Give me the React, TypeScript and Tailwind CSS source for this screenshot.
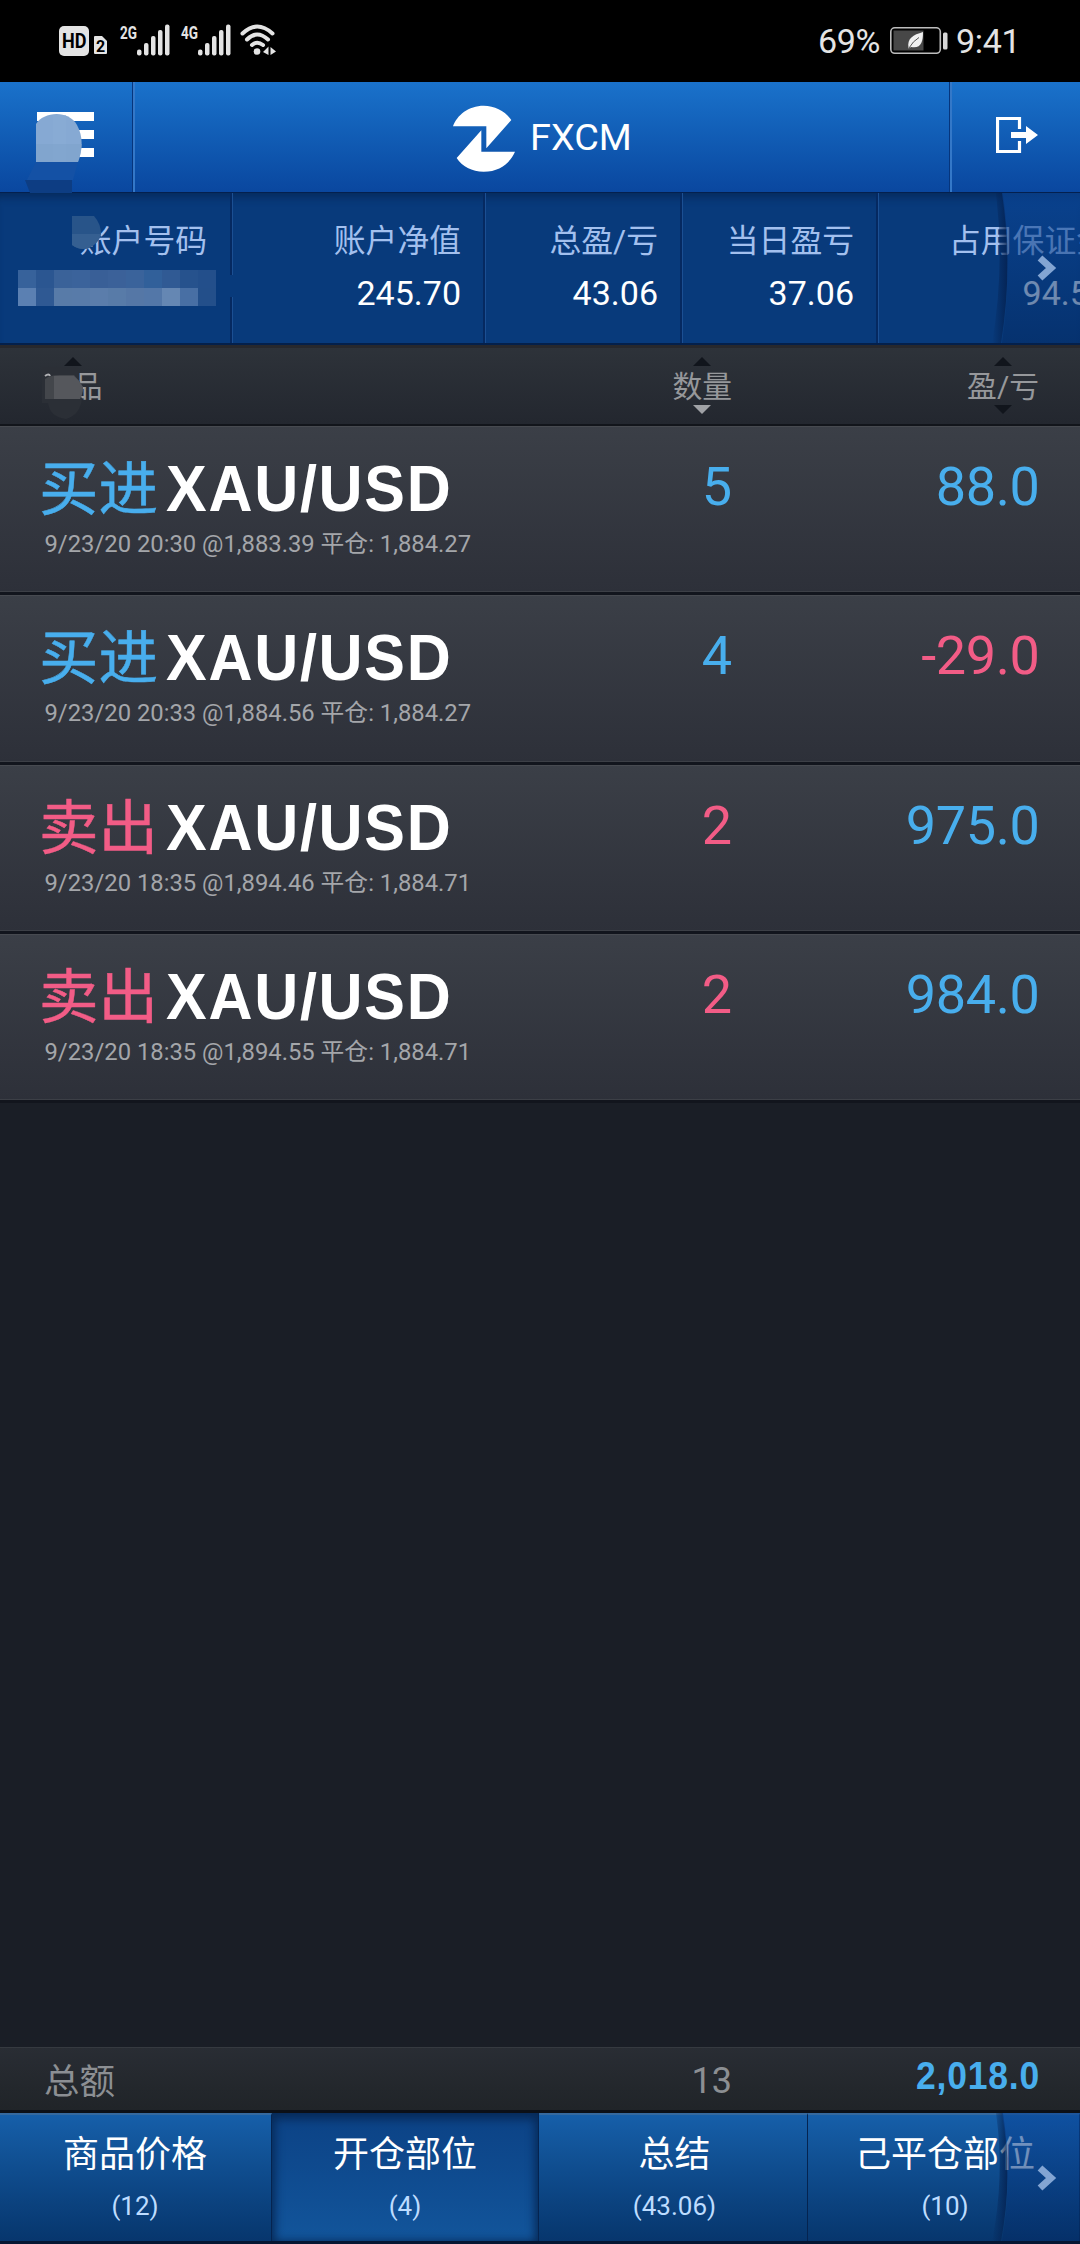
import type { ReactNode } from "react";

const cjk = "font-['Roboto','Noto_Sans_CJK_SC',sans-serif]";

/** Signal strength meter: five rising bars with the network generation above. */
function Signal({ label }: { label: string }) {
  return (
    <svg className="block h-[34px] w-[51px] overflow-visible" viewBox="0 0 51 34" fill="#e4e4e4">
      <text x="0" y="15.500" fontFamily="Roboto" fontWeight="700" fontSize="19" textLength="17" lengthAdjust="spacingAndGlyphs">
        {label}
      </text>
      <rect x="17" y="26.500" width="4.500" height="6" rx="2" />
      <rect x="24" y="20" width="4.500" height="12.500" rx="2" />
      <rect x="31" y="13" width="4.500" height="19.500" rx="2" />
      <rect x="38" y="7" width="4.500" height="25.500" rx="2" />
      <rect x="45" y="1.500" width="4.500" height="31" rx="2" />
    </svg>
  );
}

function StatusBar() {
  return (
    <div className="flex h-[82px] items-start bg-black text-[#e4e4e4]">
      <div className="ml-[59px] mt-[26px] h-[30px] w-[30px]">
        <svg className="block overflow-visible" width="30" height="30" viewBox="0 0 30 30">
          <rect width="30" height="30" rx="5" fill="#e4e4e4" />
          <text x="3" y="21.800" fontFamily="Roboto" fontWeight="700" fontSize="19.500" fill="#000" textLength="24.500" lengthAdjust="spacingAndGlyphs">HD</text>
        </svg>
      </div>
      <svg className="ml-[5px] mt-[36px] block overflow-visible" width="13" height="18" viewBox="0 0 13 18">
        <path d="M1 0H8L13 5V17Q13 18 12 18H1Q0 18 0 17V1Q0 0 1 0Z" fill="#e4e4e4" />
        <text x="2" y="15.500" fontFamily="Roboto" fontWeight="700" fontSize="16" fill="#000">2</text>
      </svg>
      <div className="ml-[13px] mt-[23px]"><Signal label="2G" /></div>
      <div className="ml-[10px] mt-[23px]"><Signal label="4G" /></div>
      <svg className="ml-[7px] mt-[24px] block" width="40" height="33" viewBox="0 0 40 33" fill="none" stroke="#e4e4e4" strokeWidth="4" strokeLinecap="round">
        <path d="M3.500 9.500Q18 -4.500 33.500 9.500" />
        <path d="M8 15.500Q18 5.500 29 15.500" />
        <path d="M13 21Q18 16.500 24 21" />
        <circle cx="18" cy="27.500" r="3.300" fill="#e4e4e4" stroke="none" />
        <path d="M24 28L29.500 22.500V31M31.500 31V23L37 27.500Z" fill="#e4e4e4" stroke="none" />
      </svg>
      <div className="ml-auto mt-[21px] w-[63px] whitespace-nowrap font-['Roboto'] text-[34px] leading-[40px] tracking-[-0.3px]">69%</div>
      <svg className="ml-[9px] mt-[27px] block" width="58" height="28" viewBox="0 0 58 28">
        <rect x="0.800" y="0.800" width="49.500" height="25.500" rx="4" fill="none" stroke="#bdbdbd" strokeWidth="1.600" />
        <rect x="3.500" y="3.500" width="30" height="20" fill="#474747" />
        <path d="M18.500 21C17 11 23 8 33 5C33 15 31 22 21 20L18.800 21.500Z" fill="#f0f0f0" />
        <path d="M19 21Q23 14 29 10.500" stroke="#555" fill="none" strokeWidth="1" />
        <rect x="53" y="5.500" width="4.500" height="17" rx="1.500" fill="#d8d8d8" />
      </svg>
      <div className="ml-[8px] mr-[62px] mt-[21px] w-[62px] whitespace-nowrap font-['Roboto'] text-[34px] leading-[40px] tracking-[-0.3px]">9:41</div>
    </div>
  );
}

function Header() {
  return (
    <header className="relative flex h-[111px] border-b border-[#04204f] bg-linear-to-b from-[#1a72cb] to-[#0a479f] text-white">
      <div className="flex w-[132px] flex-col gap-[9px] pl-[37px] pt-[30px]">
        <div className="h-[9px] w-[57px] bg-white" />
        <div className="h-[9px] w-[57px] bg-white" />
        <div className="h-[9px] w-[57px] bg-white" />
      </div>
      <div className="flex flex-1 border-l border-[#06357c] shadow-[inset_2px_0_0_#3478c8]">
        <svg className="ml-[319px] mt-[22px] block" width="65" height="69" viewBox="155 70 195 207" fill="#fff">
          <path d="M158 137C170 103 205 75 250 75C285 75 315 92 333 118L258 203V137Z" />
          <path d="M344 213C330 245 300 273 250 273C215 273 185 257 169 232L243 149V213Z" />
        </svg>
        <div className="ml-[13px] mt-[33px] font-['Roboto'] text-[37.800px] leading-[44px]">FXCM</div>
      </div>
      <div className="w-[131px] border-l border-[#06357c] pl-[46px] pt-[35px] shadow-[inset_2px_0_0_#3478c8]">
        <svg className="block" width="43" height="37" viewBox="0 0 43 37">
          <path d="M23.500 12V1.500H1.500V34.500H23.500V24" fill="none" stroke="#fff" strokeWidth="3.200" />
          <path d="M15 15H30V9L42 18L30 27V21H15Z" fill="#fff" />
        </svg>
      </div>
      {/* redaction smudge over the menu button */}
      <svg className="absolute left-[15px] top-[25px]" width="70" height="95" viewBox="0 0 70 95">
        <path d="M21 17C28 5 53 2 62 18C68 29 68 42 63 55H21Z" fill="#86a9d3" />
        <path d="M38 8H51V55H38Z" fill="#8badd5" opacity=".6" />
        <path d="M21 37H67Q66 47 63 55H21Z" fill="#7fa3cb" opacity=".6" />
        <path d="M21 55H63L58 73H12Z" fill="#1451a5" />
        <path d="M10 73H57V86L62 95H10L15 86Z" fill="#0d3d83" />
      </svg>
    </header>
  );
}

/** Curved shade at the right edge of a strip that scrolls sideways. */
function ScrollShade({ height, id, chevronTop }: { height: number; id: string; chevronTop: number }) {
  return (
    <svg className="absolute right-0 top-0" width="88" height={height} viewBox={`0 0 88 ${height}`}>
      <defs>
        <linearGradient id={id} x1="0" y1="0" x2="0" y2="1">
          <stop offset="0" stopColor="#0a479b" />
          <stop offset="1" stopColor="#042c66" />
        </linearGradient>
        <linearGradient id={`${id}-edge`} x1="0" y1="0" x2="1" y2="0">
          <stop offset="0" stopColor="#04204f" stopOpacity="0" />
          <stop offset="1" stopColor="#04204f" stopOpacity=".85" />
        </linearGradient>
      </defs>
      <path d={`M4 0H11Q21 ${height / 2} 9 ${height}H0Q13 ${height / 2} 4 0Z`} fill={`url(#${id}-edge)`} />
      <path d={`M10 0Q21 ${height / 2} 10 ${height}H88V0Z`} fill={`url(#${id})`} opacity=".58" />
      <path d={`M48 ${chevronTop + 2}L59 ${chevronTop + 12}L48 ${chevronTop + 22}`} fill="none" stroke="#83a5d3" strokeWidth="7" />
    </svg>
  );
}

function Metric({ label, value, box }: { label: string; value: string; box: string }) {
  return (
    <div className={`flex shrink-0 flex-col items-end whitespace-nowrap border-r-2 border-[#052961] pt-[26px] shadow-[1px_0_0_#1b4f93] ${box}`}>
      <div className="h-[50px] text-[31.800px] leading-[45px] text-[#a3c0ee]">{label}</div>
      <div className="h-[50px] text-[34px] leading-[49px] text-white">{value}</div>
    </div>
  );
}

const tiles = [
  ["#37629b", "#5b80b2"], ["#2b5691", "#2f5993"], ["#3a6299", "#587ba8"], ["#3b639b", "#587ba9"], ["#395f97", "#5b7dab"], ["#3b6199", "#587ba8"],
  ["#3a639b", "#5577a6"], ["#31609a", "#5377a8"], ["#305a94", "#6587b3"], ["#26528d", "#486fa4"], ["#234f8b", "#234f8a"],
];

function AccountBar() {
  return (
    <section className="relative flex h-[152px] overflow-hidden border-b-2 border-[#04204b] bg-[#083a7b] shadow-[inset_0_10px_9px_-6px_#062a5c]">
      <Metric label="账户号码" value="" box="w-[232px] pr-[23px]" />
      <Metric label="账户净值" value="245.70" box="w-[253px] pr-[22px]" />
      <Metric label="总盈/亏" value="43.06" box="w-[197px] pr-[22px]" />
      <Metric label="当日盈亏" value="37.06" box="w-[196px] pr-[22px]" />
      <Metric label="占用保证金" value="94.52" box="w-[254px] pr-[22px]" />
      <svg className="absolute left-[72px] top-[23px]" width="30" height="35" viewBox="0 0 30 35">
        <path d="M0 0H22Q29 8 29 18Q27 27 17 32Q8 35 0 29Z" fill="#285489" />
        <path d="M0 18H29Q27 27 17 32Q8 35 0 29Z" fill="#355f91" />
      </svg>
      <div className="absolute left-[18px] top-[77px] flex">
        {tiles.map(([top, bottom], i) => (
          <div key={i} className="w-[18px]">
            <div className="h-[18px]" style={{ backgroundColor: top }} />
            <div className="h-[18px]" style={{ backgroundColor: bottom }} />
          </div>
        ))}
      </div>
      <div className="absolute left-[228px] top-[82px] h-[22px] w-[6px] bg-[#083a7b]" />
      <ScrollShade height={150} id="metrics" chevronTop={63} />
    </section>
  );
}

function SortLabel({ children, up, down }: { children: ReactNode; up: string; down: string }) {
  return (
    <div className="flex flex-col items-center pt-[12px] text-[29.800px] text-[#96989b]">
      <svg className={`block ${up}`} width="18" height="9" viewBox="0 0 18 9" fill="currentColor"><path d="M0 9L9 0L18 9Z" /></svg>
      <div className="flex h-[39px] items-center whitespace-nowrap pt-px leading-[39px]">{children}</div>
      <svg className={`block ${down}`} width="18" height="9" viewBox="0 0 18 9" fill="currentColor"><path d="M0 0L9 9L18 0Z" /></svg>
    </div>
  );
}

function ColumnHeader() {
  return (
    <div className="relative flex h-[81px] border-b-2 border-[#12151b] bg-linear-to-b from-[#2e333a] to-[#23272f] shadow-[inset_0_3px_0_#27282d]">
      <div className="flex w-[600px] justify-start pl-[43px]"><SortLabel up="text-[#11151c]" down="text-transparent">商品</SortLabel></div>
      <div className="flex w-[132px] justify-end"><SortLabel up="text-[#11151c]" down="text-[#a0a2a6]">数量</SortLabel></div>
      <div className="flex flex-1 justify-end pr-[41px]"><SortLabel up="text-[#11151c]" down="text-[#11151c]">盈/亏</SortLabel></div>
      <svg className="absolute left-[42px] top-[22px]" width="42" height="54" viewBox="0 0 42 54">
        <path d="M0 0H36V20L40 32Q38 48 24 52Q8 50 6 36H0Z" fill="#2b2f36" />
        <path d="M3 9Q7 6 8 9" stroke="#b0b1b4" strokeWidth="2" fill="none" />
        <path d="M3 12Q8 8 18 8H32Q38 14 41 20Q41 27 38 27V32H3Z" fill="#43464b" />
        <path d="M12 9H32Q38 14 41 20Q41 27 38 32H12Z" fill="#55575c" />
      </svg>
    </div>
  );
}

const blue = "text-[#48aeed]";
const pink = "text-[#f25c86]";

const positions = [
  { side: "买进", tone: blue, time: "9/23/20 20:30", open: "1,883.39", close: "1,884.27", qty: "5", pl: "88.0", plTone: blue },
  { side: "买进", tone: blue, time: "9/23/20 20:33", open: "1,884.56", close: "1,884.27", qty: "4", pl: "-29.0", plTone: pink },
  { side: "卖出", tone: pink, time: "9/23/20 18:35", open: "1,894.46", close: "1,884.71", qty: "2", pl: "975.0", plTone: blue },
  { side: "卖出", tone: pink, time: "9/23/20 18:35", open: "1,894.55", close: "1,884.71", qty: "2", pl: "984.0", plTone: blue },
];

function Position({ p }: { p: (typeof positions)[number] }) {
  return (
    <div className="flex h-[169.250px] border-b-3 border-[#12151d] bg-linear-to-b from-[#3b3f47] to-[#2d3039] shadow-[inset_0_1px_0_#474a50,inset_0_-1px_0_#3c3f46]">
      <div className="w-[600px] pt-[29px]">
        <div className="flex h-[76px] whitespace-nowrap leading-[70px]">
          <span className={`ml-[39px] w-[127px] text-[59.500px] [-webkit-text-stroke:0.5px_currentColor] ${p.tone}`}>{p.side}</span>
          <span className="origin-[0_56px] scale-y-[1.07] font-['Liberation_Sans'] text-[61px] font-bold tracking-[1.700px] text-white">XAU/USD</span>
        </div>
        <div className="ml-[44.500px] whitespace-nowrap text-[23.800px] leading-[26px] text-[#a4a6aa]">
          {p.time} @{p.open} 平仓: {p.close}
        </div>
      </div>
      <div className={`w-[132px] pt-[30px] text-right text-[54px] leading-[62px] ${p.tone}`}>{p.qty}</div>
      <div className={`flex-1 pr-[40.500px] pt-[30px] text-right text-[54px] leading-[62px] tracking-[-0.400px] ${p.plTone}`}>{p.pl}</div>
    </div>
  );
}

function Totals() {
  return (
    <div className="flex h-[66px] border-b-3 border-t border-b-[#0c1017] border-t-[#363a40] bg-linear-to-b from-[#292d34] to-[#202428] text-[#8c8f93]">
      <div className="w-[600px] pl-[44px] pt-[12px] text-[35.500px] leading-[44px]">总额</div>
      <div className="w-[132px] pt-[11px] text-right text-[36px] leading-[44px]">13</div>
      <div className={`flex flex-1 justify-end pr-[40px] pt-[7px] font-['Liberation_Sans'] text-[35.500px] font-bold leading-[44px] tracking-[0.800px] ${blue}`}>
        <span className="origin-[0_34px] scale-y-[1.07]">2,018.0</span>
      </div>
    </div>
  );
}

function Tab({ label, note, box, active }: { label: string; note: string; box: string; active?: boolean }) {
  const look = active
    ? "bg-linear-to-b from-[#0c4285] to-[#12559b] shadow-[inset_0_3px_10px_3px_#072a58]"
    : "border-t-2 border-t-[#35699f] bg-linear-to-b from-[#165fa9] to-[#07366d] pb-[2px]";
  return (
    <div className={`flex shrink-0 flex-col items-center whitespace-nowrap border-r border-r-[#052450] ${look} ${box}`}>
      <div className={`h-[51px] text-[36px] leading-[44px] text-white ${active ? "mt-[20px]" : "mt-[18px]"}`}>{label}</div>
      <div className="text-[26px] leading-[44px] text-[#bddcff]">{note}</div>
    </div>
  );
}

export default function App() {
  return (
    <div className={`flex h-[2244px] w-[1080px] flex-col overflow-hidden bg-[#1a1e26] ${cjk}`}>
      <StatusBar />
      <Header />
      <AccountBar />
      <ColumnHeader />
      <main className="flex-1">
        {positions.map((p, i) => (
          <Position key={i} p={p} />
        ))}
      </main>
      <Totals />
      <nav className="relative flex h-[131px] overflow-hidden border-b-3 border-[#061632] bg-[#052450]">
        <Tab label="商品价格" note="(12)" box="w-[272px] pr-px" />
        <Tab label="开仓部位" note="(4)" box="w-[267px]" active />
        <Tab label="总结" note="(43.06)" box="w-[269px] pl-[3px]" />
        <Tab label="己平仓部位" note="(10)" box="w-[272px] pl-[3px]" />
        <ScrollShade height={128} id="tabs" chevronTop={53} />
      </nav>
    </div>
  );
}
